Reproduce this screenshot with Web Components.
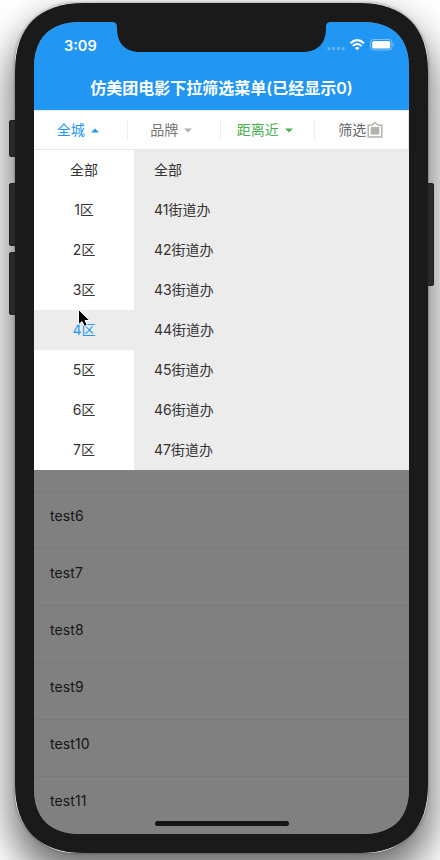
<!DOCTYPE html>
<html lang="zh-CN">
<head>
<meta charset="utf-8">
<title>下拉筛选菜单</title>
<style>
html,body{margin:0;width:440px;height:860px;overflow:hidden;background:#fff}
body{font-family:Inter,"Noto Sans CJK SC",sans-serif}
</style>
</head>
<body>
<phone-frame>
  <status-bar time="3:09"></status-bar>
  <app-title>仿美团电影下拉筛选菜单(已经显示0)</app-title>
  <filter-bar>
    <filter-tab arrow="up" style="--c:#2196f3;--a:#2196f3">全城</filter-tab>
    <filter-tab arrow="down" style="--c:#757575;--a:#b2b2aa">品牌</filter-tab>
    <filter-tab arrow="down" style="--c:#4caf50;--a:#4caf50">距离近</filter-tab>
    <filter-tab arrow="icon" style="--c:#666;--a:#b2b2aa">筛选</filter-tab>
  </filter-bar>
  <drop-menu></drop-menu>
  <test-list from="6" to="11"></test-list>
</phone-frame>
<script>
const define = (name, render) => customElements.define(name, class extends HTMLElement {
  constructor(){ super(); this.attachShadow({mode:'open'}); }
  connectedCallback(){ this.shadowRoot.innerHTML = render(this); }
});

define('phone-frame', () => `<style>
:host{display:block;position:relative;width:440px;height:860px;overflow:hidden}
svg{position:absolute;left:0;top:0}
.key{position:absolute;background:#292929;border-radius:3px;box-shadow:inset 0 0 0 1px #202020}
.shade{position:absolute;left:15px;top:3px;width:413px;height:850px;border-radius:60px;box-shadow:0 21px 38px 4px rgba(0,0,0,.57),0 0 3px rgba(0,0,0,.4)}
.screen{position:relative;box-sizing:border-box;margin:22px 0 0 34px;width:375px;height:812px;display:flex;flex-direction:column;background:#808080;clip-path:path("M0 46 C0 16 16 0 46 0 H329 C359 0 375 16 375 46 V766 C375 796 359 812 329 812 H46 C16 812 0 796 0 766 Z")}
.root{display:flow-root;position:relative}
.home{position:absolute;left:120.5px;bottom:8px;width:134px;height:5px;border-radius:3px;background:#151515}
</style>
<div class="shade"></div>
<div class="key" style="left:9px;top:120px;width:9px;height:37px"></div>
<div class="key" style="left:9px;top:183px;width:9px;height:63px"></div>
<div class="key" style="left:9px;top:252px;width:9px;height:63px"></div>
<div class="key" style="left:425px;top:183px;width:9px;height:103px"></div>
<svg width="440" height="860"><path fill="#1a1a1a" d="M15 71 C15 27 39 3 83 3 H360 C404 3 428 27 428 71 V785 C428 829 404 853 360 853 H83 C39 853 15 829 15 785 Z"/></svg>
<div class="root"><div class="screen"><slot></slot><div class="home"></div></div></div>
<svg width="440" height="860"><path fill="#1a1a1a" d="M112 21 V22 C116 22 117 24 117 28 C117 43 125 52 140 52 H303 C318 52 326 43 326 28 C326 24 327 22 331 22 V21 Z"/>
<path d="M78.5 309.5 V324.7 L82 321.5 L84.4 326.5 L87.2 325.1 L85 320.5 H89.8 Z" fill="#000" stroke="#fff" stroke-width="1"/></svg>`);

define('status-bar', el => `<style>
:host{display:flex;height:44px;flex:none;background:#2196f3;color:#fff;align-items:center;justify-content:space-between;box-sizing:border-box;padding:2px 13px 0 30px;font-size:14.5px;font-weight:600}
</style><span>${el.getAttribute('time')}</span>
<svg width="70" height="20" viewBox="0 0 70 20" fill="#fff"><g opacity=".3"><rect x="1.5" y="12" width="3" height="3" rx="1"/><rect x="6.2" y="12" width="3" height="3" rx="1"/><rect x="10.9" y="12" width="3" height="3" rx="1"/><rect x="15.6" y="12" width="3" height="3" rx="1"/></g>
<path d="M31.2 15.3 L28.9 12.9 Q31.2 11.2 33.5 12.9Z"/><g fill="none" stroke="#fff" stroke-width="2"><path d="M24.4 8.3 Q31.2 2 38 8.3"/><path d="M26.8 10.9 Q31.2 7 35.6 10.9"/></g>
<rect x="44.5" y="4.5" width="21.5" height="10.5" rx="3" fill="none" stroke="#fff" opacity=".4"/><rect x="46.2" y="6" width="18" height="7.5" rx="1.6"/><path d="M67.3 8 Q69.1 9.7 67.3 11.6Z" opacity=".5"/></svg>`);

define('app-title', () => `<style>
:host{display:flex;height:44px;flex:none;background:#2196f3;color:#fff;align-items:center;justify-content:center;box-sizing:border-box;padding:0 0 2px 0;font-size:16px;font-weight:600;white-space:nowrap}
</style><span><slot></slot></span>`);

define('filter-bar', () => `<style>
:host{display:grid;grid-template-columns:repeat(4,1fr);height:40px;flex:none;box-sizing:border-box;background:#fff;border:1px solid #e8e8e8;border-left-width:0}
</style><slot></slot>`);

define('filter-tab', el => {
  const kind = el.getAttribute('arrow');
  const art = {
    up:'<svg class="arrow" width="8" height="5"><path d="M0 4.5 L4 .5 L8 4.5Z"/></svg>',
    down:'<svg class="arrow" width="8" height="5"><path d="M0 .5 L4 4.5 L8 .5Z"/></svg>',
    icon:'<svg width="16" height="18" style="margin-left:1px"><path d="M1.2 4.2 H4.8 L8 1.4 L11.2 4.2 H14.8 V16 H1.2Z" fill="none" stroke="var(--a)" stroke-width="1.5"/><path d="M3.7 6 H12.3 V13.5 H3.7Z"/></svg>'
  }[kind];
  return `<style>
:host{display:flex;box-sizing:border-box;height:38px;align-items:center;justify-content:center;padding:0 6px 0 0;color:var(--c);font-size:14px;line-height:20px;white-space:nowrap;background:linear-gradient(#eee,#eee) right center/1px 20px no-repeat}
:host(:last-child){background:none;padding-right:1px}
svg{fill:var(--a);flex:none}
.arrow{margin-left:6px}
</style><slot></slot>${art}`;
});

define('drop-menu', () => {
  const left = ['全部','1区','2区','3区','4区','5区','6区','7区'];
  const right = ['全部','41街道办','42街道办','43街道办','44街道办','45街道办','46街道办','47街道办'];
  const rows = (list, on) => list.map((t, i) => `<div class="row${i === on ? ' on' : ''}">${t}</div>`).join('');
  return `<style>
:host{display:grid;grid-template-columns:100px 1fr;flex:none;height:320px;background:#ececec;font-size:14px;color:#333}
.row{height:40px;box-sizing:border-box;padding-bottom:2px;display:flex;align-items:center;white-space:nowrap}
.l{background:#fff}.l .row{justify-content:center}
.r .row{padding-left:20px}
.on{background:#ececec;color:#2196f3}
</style><div class="l">${rows(left, 4)}</div><div class="r">${rows(right, -1)}</div>`;
});

define('test-list', el => {
  let s = '';
  for (let i = +el.getAttribute('from'); i <= +el.getAttribute('to'); i++) s += `<div>test${i}</div>`;
  return `<style>
:host{display:block;flex:1;min-height:0;overflow:hidden;padding-top:21px;background:#808080;color:#161616;font-size:14px;letter-spacing:.08px}
div{height:57px;box-sizing:border-box;border-top:1px solid #797979;padding:0 16px 9px;display:flex;align-items:center}
</style>${s}`;
});
</script>
</body>
</html>
